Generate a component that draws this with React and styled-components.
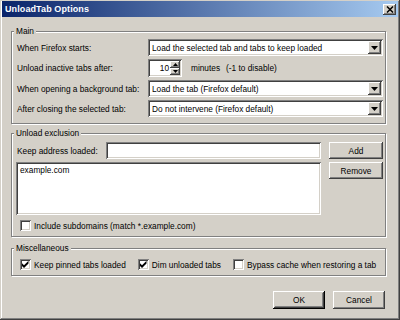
import React from "react";
import styled, { createGlobalStyle, css } from "styled-components";

const GlobalStyle = createGlobalStyle`
  html, body {
    margin: 0;
    padding: 0;
    background: #d4d0c8;
  }
  body {
    font-family: "Liberation Sans", Arial, sans-serif;
    font-size: 8.3px;
    color: #000;
  }
`;

const raised = css`
  background: #d4d0c8;
  box-shadow: inset -1px -1px #404040, inset 1px 1px #fff,
    inset -2px -2px #808080, inset 2px 2px #d4d0c8;
`;

const sunken = css`
  background: #fff;
  box-shadow: inset 1px 1px #808080, inset -1px -1px #fff,
    inset 2px 2px #404040, inset -2px -2px #d4d0c8;
`;

const Window = styled.div`
  width: 400px;
  height: 320px;
  box-sizing: border-box;
  padding: 1px 2px 2px 2px;
  background: #d4d0c8;
  box-shadow: inset -1px -1px #404040, inset 1px 1px #d4d0c8,
    inset -2px -2px #808080, inset 2px 2px #fff;
`;

const TitleBar = styled.div`
  height: 16px;
  display: flex;
  align-items: center;
  justify-content: space-between;
  padding: 0 2px 0 3px;
  background: linear-gradient(to right, #0a246a, #a6caf0);
`;

const Title = styled.span`
  color: #fff;
  font-weight: bold;
  font-size: 9px;
  letter-spacing: 0.1px;
`;

const CloseButton = styled.span`
  width: 13px;
  height: 11px;
  display: flex;
  align-items: center;
  justify-content: center;
  ${raised};
`;

const Body = styled.div`
  padding: 14px 12px 0 9px;
`;

const Group = styled.div`
  border: 1px solid #808080;
  box-shadow: inset 1px 1px #fff, 1px 1px #fff;
  padding: 0 2px ${(p) => p.$pb}px 4px;
  margin-bottom: ${(p) => p.$mb || 0}px;
`;

const Legend = styled.div`
  width: fit-content;
  margin: -6px 0 0 -2px;
  padding: 0 2px;
  line-height: 11px;
  background: #d4d0c8;
`;

const FormGrid = styled.div`
  display: grid;
  grid-template-columns: 132px 1fr;
  row-gap: 3px;
  align-items: center;
  margin-top: 2px;
`;

const Label = styled.span`
  padding-left: 1px;
  white-space: nowrap;
`;

const Combo = styled.div`
  height: 17px;
  box-sizing: border-box;
  padding: 2px;
  display: flex;
  align-items: stretch;
  ${sunken};
`;

const ComboText = styled.span`
  flex: 1;
  display: flex;
  align-items: center;
  padding-left: 2px;
  white-space: nowrap;
  overflow: hidden;
`;

const DropButton = styled.span`
  width: 13px;
  display: flex;
  align-items: center;
  justify-content: center;
  ${raised};
`;

const SpinRow = styled.div`
  display: flex;
  align-items: center;
`;

const SpinBox = styled.div`
  width: 34px;
  height: 18px;
  box-sizing: border-box;
  padding: 2px;
  display: flex;
  ${sunken};
`;

const SpinValue = styled.span`
  flex: 1;
  display: flex;
  align-items: center;
  justify-content: flex-end;
  padding-right: 1px;
`;

const SpinButtons = styled.span`
  width: 10px;
  display: flex;
  flex-direction: column;
`;

const SpinArrow = styled.span`
  flex: 1;
  display: flex;
  align-items: center;
  justify-content: center;
  ${raised};
`;

const Unit = styled.span`
  margin-left: ${(p) => p.$ml}px;
  white-space: nowrap;
`;

const ExclusionGrid = styled.div`
  display: grid;
  grid-template-columns: 1fr 54px;
  column-gap: 8px;
  margin-top: 3px;
`;

const LeftColumn = styled.div`
  display: flex;
  flex-direction: column;
  gap: 3px;
`;

const AddressRow = styled.div`
  display: flex;
  align-items: center;
`;

const AddressLabel = styled(Label)`
  flex: 1;
`;

const TextInput = styled.div`
  width: 215px;
  height: 17px;
  ${sunken};
`;

const ListBox = styled.div`
  height: 53px;
  box-sizing: border-box;
  padding: 3px 4px;
  line-height: 11px;
  ${sunken};
`;

const ButtonColumn = styled.div`
  display: flex;
  flex-direction: column;
  gap: 3px;
`;

const Button = styled.div`
  width: ${(p) => p.$w || "auto"};
  height: ${(p) => p.$h}px;
  display: flex;
  align-items: center;
  justify-content: center;
  ${raised};
  ${(p) =>
    p.$default &&
    css`
      box-shadow: inset -1px -1px #000, inset 1px 1px #fff,
        inset -2px -2px #404040, inset 2px 2px #d4d0c8,
        inset -3px -3px #808080;
    `}
`;

const CheckRow = styled.div`
  display: flex;
  align-items: center;
  gap: 12px;
  height: 13px;
  padding-left: 4px;
  margin-top: 4px;
`;

const CheckItem = styled.label`
  display: flex;
  align-items: center;
  gap: 3px;
  white-space: nowrap;
`;

const CheckBox = styled.span`
  width: 11px;
  height: 11px;
  box-sizing: border-box;
  padding: 2px;
  display: flex;
  ${sunken};
`;

const Footer = styled.div`
  display: flex;
  justify-content: flex-end;
  gap: 8px;
  margin-top: 15px;
  padding-right: 1px;
`;

const DownTriangle = ({ w = 7, h = 4 }) => (
  <svg width={w} height={h} viewBox={`0 0 ${w} ${h}`}>
    <polygon points={`0,0 ${w},0 ${w / 2},${h}`} fill="#000" />
  </svg>
);

const UpTriangle = ({ w = 5, h = 3 }) => (
  <svg width={w} height={h} viewBox={`0 0 ${w} ${h}`}>
    <polygon points={`0,${h} ${w},${h} ${w / 2},0`} fill="#000" />
  </svg>
);

const Check = ({ checked }) => (
  <CheckBox>
    {checked && (
      <svg width="7" height="7" viewBox="0 0 7 7">
        <polygon points="0,2.2 2,4.2 6.5,-0.2 6.5,2.6 2,7 0,5" fill="#000" />
      </svg>
    )}
  </CheckBox>
);

const Select = ({ value }) => (
  <Combo>
    <ComboText>{value}</ComboText>
    <DropButton>
      <DownTriangle />
    </DropButton>
  </Combo>
);

const App = () => {
  return (
    <>
      <GlobalStyle />
      <Window>
        <TitleBar>
          <Title>UnloadTab Options</Title>
          <CloseButton>
            <svg width="8" height="7" viewBox="0 0 8 7">
              <path d="M1 0.5 L7 6.5 M7 0.5 L1 6.5" stroke="#000" strokeWidth="1.5" />
            </svg>
          </CloseButton>
        </TitleBar>
        <Body>
          <Group $pb={6} $mb={9}>
            <Legend>Main</Legend>
            <FormGrid>
              <Label>When Firefox starts:</Label>
              <Select value="Load the selected tab and tabs to keep loaded" />
              <Label>Unload inactive tabs after:</Label>
              <SpinRow>
                <SpinBox>
                  <SpinValue>10</SpinValue>
                  <SpinButtons>
                    <SpinArrow>
                      <UpTriangle />
                    </SpinArrow>
                    <SpinArrow>
                      <DownTriangle w={5} h={3} />
                    </SpinArrow>
                  </SpinButtons>
                </SpinBox>
                <Unit $ml={9}>minutes</Unit>
                <Unit $ml={6}>(-1 to disable)</Unit>
              </SpinRow>
              <Label>When opening a background tab:</Label>
              <Select value="Load the tab (Firefox default)" />
              <Label>After closing the selected tab:</Label>
              <Select value="Do not intervene (Firefox default)" />
            </FormGrid>
          </Group>

          <Group $pb={4} $mb={11}>
            <Legend>Unload exclusion</Legend>
            <ExclusionGrid>
              <LeftColumn>
                <AddressRow>
                  <AddressLabel>Keep address loaded:</AddressLabel>
                  <TextInput />
                </AddressRow>
                <ListBox>example.com</ListBox>
              </LeftColumn>
              <ButtonColumn>
                <Button $h={17}>Add</Button>
                <Button $h={17}>Remove</Button>
              </ButtonColumn>
            </ExclusionGrid>
            <CheckRow>
              <CheckItem>
                <Check />
                Include subdomains (match *.example.com)
              </CheckItem>
            </CheckRow>
          </Group>

          <Group $pb={4}>
            <Legend>Miscellaneous</Legend>
            <CheckRow>
              <CheckItem>
                <Check checked />
                Keep pinned tabs loaded
              </CheckItem>
              <CheckItem>
                <Check checked />
                Dim unloaded tabs
              </CheckItem>
              <CheckItem>
                <Check />
                Bypass cache when restoring a tab
              </CheckItem>
            </CheckRow>
          </Group>

          <Footer>
            <Button $w="52px" $h={18} $default>
              OK
            </Button>
            <Button $w="52px" $h={18}>
              Cancel
            </Button>
          </Footer>
        </Body>
      </Window>
    </>
  );
};

export default App;
